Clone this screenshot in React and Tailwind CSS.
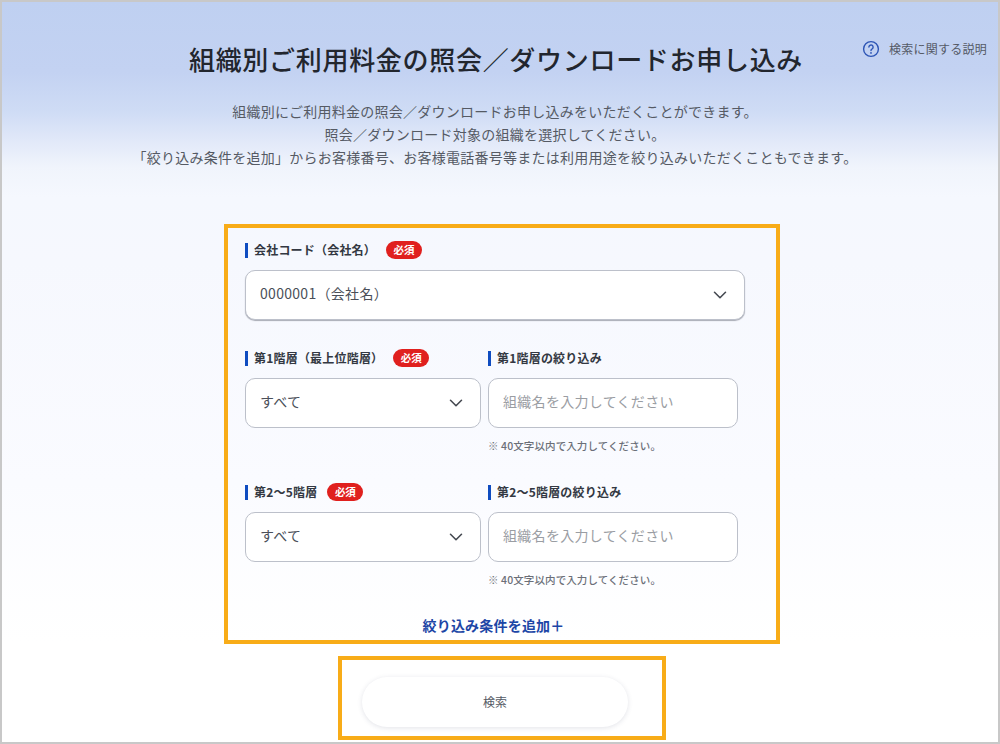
import { ChevronDown } from 'lucide-react'

const font = { jp: 'font-["Noto_Sans_CJK_JP","Noto_Sans",sans-serif]' }

function Label({ children, required }) {
  return (
    <div className="flex items-center h-[20px]">
      <span className="w-[3px] h-[15px] bg-[#0f4cc0] mr-[6px]" />
      <span className="text-[12px] font-bold text-[#333842] tracking-[0.2px] leading-none">{children}</span>
      {required && (
        <span className="ml-[10px] flex items-center justify-center w-[36px] h-[18px] rounded-full bg-[#e0201e] text-white text-[10.5px] font-bold leading-none">
          必須
        </span>
      )}
    </div>
  )
}

function Select({ value, className }) {
  return (
    <div className={`flex items-center justify-between bg-white border border-[#bcc0ca] rounded-[10px] pl-[14px] pr-[13px] text-[14px] tracking-[0.3px] text-[#4a4f59] ${className}`}>
      <span className="pb-[3px]">{value}</span>
      <ChevronDown size={22} strokeWidth={1.7} className="text-[#444850]" />
    </div>
  )
}

function FilterInput() {
  return (
    <div className="flex items-center w-[250px] h-[50px] bg-white border border-[#bcc0ca] rounded-[10px] pl-[14px] pb-[3px] text-[14px] text-[#9a9da3] tracking-[0.3px]">
      組織名を入力してください
    </div>
  )
}

function Row({ left, required, right }) {
  return (
    <div className="flex gap-[7px] mt-[28px]">
      <div className="w-[236px]">
        <Label required={required}>{left}</Label>
        <Select value="すべて" className="h-[50px] mt-[10px]" />
      </div>
      <div className="w-[250px]">
        <Label>{right}</Label>
        <div className="mt-[10px]">
          <FilterInput />
        </div>
        <p className="mt-[10px] text-[10.5px] font-medium tracking-[0.1px] leading-[16px] text-[#6b6f78]">※ 40文字以内で入力してください。</p>
      </div>
    </div>
  )
}

export default function App() {
  return (
    <div className={`w-[1000px] h-[744px] overflow-hidden border-2 border-[#c8c8c8] bg-[linear-gradient(180deg,#bfd0f1_0px,#c3d2f2_70px,#cfdcf5_110px,#e2e9f9_140px,#f0f4fc_165px,#f5f8fe_195px,#f6f8fe_260px,#fafbff_480px,#ffffff_640px)] ${font.jp}`}>
      <div className="flex items-start pt-[40px] pl-[186px]">
        <h1 className="w-[616px] text-center text-[26px] leading-[34px] font-medium text-[#22262e] tracking-[0.7px]">
          組織別ご利用料金の照会／ダウンロードお申し込み
        </h1>
        <a className="ml-[58px] mt-[-2px] flex items-center gap-[9px] text-[12px] text-[#555a66] tracking-[0.25px] whitespace-nowrap">
          <svg width="18" height="18" viewBox="0 0 18 18" fill="none">
            <circle cx="9" cy="9" r="7.4" stroke="#2d55b5" strokeWidth="1.4" />
            <path d="M6.9 7.1a2.1 2.1 0 1 1 3.3 1.7c-.8.5-1.2 1-1.2 1.8" stroke="#2d55b5" strokeWidth="1.4" strokeLinecap="round" />
            <circle cx="9" cy="12.9" r="0.9" fill="#2d55b5" />
          </svg>
          検索に関する説明
        </a>
      </div>

      <div className="mt-[24px] text-center text-[14px] tracking-[0.25px] leading-[23px] text-[#555a64] pr-[10px]">
        <p>組織別にご利用料金の照会／ダウンロードお申し込みをいただくことができます。</p>
        <p>照会／ダウンロード対象の組織を選択してください。</p>
        <p>「絞り込み条件を追加」からお客様番号、お客様電話番号等または利用用途を絞り込みいただくこともできます。</p>
      </div>

      <div className="mt-[55px] ml-[222px] w-[556px] h-[420px] border-4 border-[#f8ac18] pt-[12px] pl-[17px]">
        <Label required>会社コード（会社名）</Label>
        <Select value="0000001（会社名）" className="w-[500px] h-[50px] mt-[10px] shadow-[0_1px_1px_#a8abb5]" />
        <Row left="第1階層（最上位階層）" required right="第1階層の絞り込み" />
        <Row left="第2〜5階層" required right="第2〜5階層の絞り込み" />
        <div className="mt-[27px] pr-[34px] text-center text-[14px] font-bold tracking-[0.2px] leading-[20px] text-[#1d46a6]">
          絞り込み条件を追加＋
        </div>
      </div>

      <div className="mt-[12px] ml-[336px] w-[328px] h-[84px] border-4 border-[#f8ac18] pt-[17px] pl-[20px]">
        <button className="block w-[266px] h-[50px] rounded-full bg-white text-[12px] text-[#555a64] shadow-[0_1px_5px_rgba(60,70,100,0.15)]">
          検索
        </button>
      </div>
    </div>
  )
}
